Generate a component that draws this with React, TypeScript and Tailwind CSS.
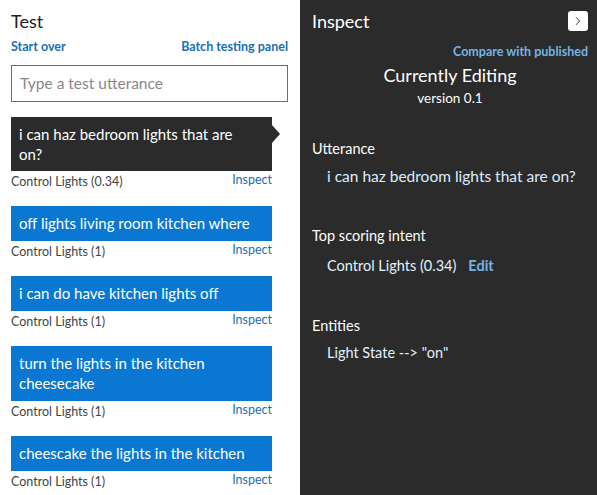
import { ChevronRight } from 'lucide-react';

type Result = { text: string; intent: string; selected?: boolean };

const results: Result[] = [
  { text: 'i can haz bedroom lights that are on?', intent: 'Control Lights (0.34)', selected: true },
  { text: 'off lights living room kitchen where', intent: 'Control Lights (1)' },
  { text: 'i can do have kitchen lights off', intent: 'Control Lights (1)' },
  { text: 'turn the lights in the kitchen cheesecake', intent: 'Control Lights (1)' },
  { text: 'cheescake the lights in the kitchen', intent: 'Control Lights (1)' },
];

function ResultCard({ item }: { item: Result }) {
  return (
    <div className="mb-[17px]">
      <div className="relative w-[261px]">
        <div
          className={
            item.selected
              ? 'bg-[#2b2b2b] text-white pl-2 pr-[24px] pt-[7px] pb-[7px] text-[15px] leading-[20px]'
              : 'bg-[#0a78d2] text-white px-2 pt-[7px] pb-[8px] text-[15px] leading-[20px]'
          }
        >
          {item.text}
        </div>
        {item.selected && (
          <div className="absolute right-[-8px] top-[8px] w-0 h-0 border-y-[9px] border-y-transparent border-l-[8px] border-l-[#2b2b2b]" />
        )}
      </div>
      <div className="flex justify-between items-start h-[18px] w-[261px] text-[12.5px] leading-[16px]">
        <span className="text-[#444] mt-[3px]">{item.intent}</span>
        <span className="text-[#1a6fb5] mt-[1px]">Inspect</span>
      </div>
    </div>
  );
}

export default function App() {
  return (
    <div
      className="flex w-[597px] h-[495px] overflow-hidden bg-white"
      style={{ fontFamily: 'Lato, "Open Sans", sans-serif' }}
    >
      {/* Test panel */}
      <div className="w-[300px] pl-[11px] pr-[12px] pt-[9px]">
        <h2 className="text-[18px] leading-[24px] text-[#222]">Test</h2>
        <div className="flex justify-between mt-[6px] text-[12.5px] leading-[16px] font-bold text-[#1a6fb5]">
          <span>Start over</span>
          <span>Batch testing panel</span>
        </div>
        <div className="mt-[10px] h-[37px] border border-[#2f7cc0] flex items-center px-2 text-[15.5px] text-[#888]">
          Type a test utterance
        </div>
        <div className="mt-[15px]">
          {results.map((r) => (
            <ResultCard key={r.text} item={r} />
          ))}
        </div>
      </div>

      {/* Inspect panel */}
      <div className="w-[297px] bg-[#2b2b2b] text-white pl-[12px] pr-[9px] pt-[9px]">
        <div className="flex items-center justify-between">
          <h2 className="text-[18px] leading-[24px]">Inspect</h2>
          <button className="w-[20px] h-[20px] bg-white rounded-[3px] flex items-center justify-center">
            <ChevronRight className="w-[14px] h-[14px] text-[#222]" strokeWidth={1.5} />
          </button>
        </div>
        <div className="text-right mt-[11px] text-[12.5px] leading-[16px] font-bold text-[#76b4e6]">
          Compare with published
        </div>
        <div className="text-center text-[18px] leading-[24px] mt-[3px]">Currently Editing</div>
        <div className="text-center text-[13.5px] leading-[18px] mt-[2px]">version 0.1</div>

        <div className="mt-[32px] text-[14.5px] leading-[20px]">Utterance</div>
        <div className="mt-[7px] pl-[15px] text-[15.5px] leading-[20px] text-[#dbeeff]">
          i can haz bedroom lights that are on?
        </div>

        <div className="mt-[40px] text-[14.5px] leading-[20px]">Top scoring intent</div>
        <div className="mt-[10px] pl-[15px] text-[14.5px] leading-[20px] text-[#e4f1fc]">
          Control Lights (0.34)
          <span className="ml-[12px] font-bold text-[#76b4e6]">Edit</span>
        </div>

        <div className="mt-[40px] text-[14.5px] leading-[20px]">Entities</div>
        <div className="mt-[7px] pl-[15px] text-[14.5px] leading-[20px] text-[#e4f1fc]">
          Light State --&gt; "on"
        </div>
      </div>
    </div>
  );
}
